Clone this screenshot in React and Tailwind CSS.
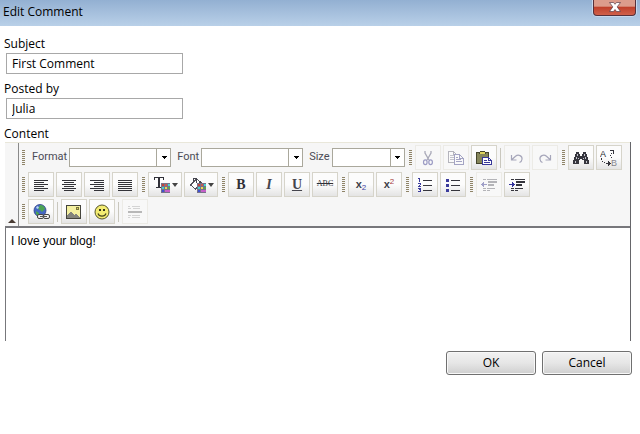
import React, { useState } from 'react';

const Icon = ({ children, w = 16, sharp = true }) => (
  <svg
    width={w}
    height="16"
    viewBox={`0 0 ${w} 16`}
    fill="none"
    shapeRendering={sharp ? 'crispEdges' : 'auto'}
    aria-hidden="true"
  >
    {children}
  </svg>
);

const Grip = () => (
  <svg width="4" height="15" viewBox="0 0 4 15" shapeRendering="crispEdges" aria-hidden="true">
    {[0, 2, 4, 6, 8, 10, 12, 14].map((y) => (
      <path key={y} d={`M0 ${y}h3v1h-3z`} fill="#8f8468" />
    ))}
  </svg>
);

const Separator = () => <div className="mx-px h-5 w-px bg-[#c9c7bd]" />;

const Group = ({ children }) => (
  <div className="flex items-center gap-0.5">
    <Grip />
    {children}
  </div>
);

const ToolButton = ({ label, disabled, menu, children }) => (
  <button
    type="button"
    title={label}
    aria-label={label}
    disabled={disabled}
    className={
      'flex h-[25px] shrink-0 items-center justify-center border ' +
      (menu ? 'w-[34px] gap-0.5 ' : 'w-[26px] ') +
      (disabled
        ? 'border-[#ecebe6] bg-[#f8f8f8]'
        : 'border-[#d6d4ca] bg-linear-to-b from-[#fcfcfc] from-50% to-[#e4e4e4]')
    }
  >
    {children}
    {menu && (
      <svg width="6" height="4" viewBox="0 0 6 4" aria-hidden="true">
        <path d="M0 0h6L3 4z" fill="#444" />
      </svg>
    )}
  </button>
);

const Combo = ({ id, label, wide }) => (
  <div className="flex items-center">
    <label htmlFor={id} className="pl-1 font-[Roboto,sans-serif] text-[11px] text-[#4a4a55]">
      {label}
    </label>
    <div className={'relative ml-0.5 ' + (wide ? 'w-[102px]' : 'w-[73px]')}>
      <select
        id={id}
        className="block h-[19px] w-full appearance-none border border-[#aaa89c] bg-white text-[11px]"
      />
      <span className="pointer-events-none absolute inset-y-0 right-0 flex w-[15px] items-center justify-center border-l border-[#aaa89c]">
        <svg width="5" height="3" viewBox="0 0 5 3" shapeRendering="crispEdges" aria-hidden="true">
          <path d="M0 0h5v1h-1v1h-1v1h-1v-1h-1v-1h-1z" fill="#000" />
        </svg>
      </span>
    </div>
  </div>
);

const AlignIcon = ({ d }) => (
  <Icon>
    <path d={d} stroke="#333338" />
  </Icon>
);

const Palette = () => (
  <>
    <path d="M8 6h9v10H8z" fill="#77738a" />
    <path d="M9 7h2v2H9z" fill="#c0463c" />
    <path d="M12 7h2v2h-2z" fill="#c85a50" />
    <path d="M15 7h2v2h-2z" fill="#48d6d6" />
    <path d="M9 10h2v2H9z" fill="#40d0d0" />
    <path d="M12 10h2v2h-2z" fill="#eeda50" />
    <path d="M15 10h2v2h-2z" fill="#58a850" />
    <path d="M9 13h2v2H9z" fill="#4050d0" />
    <path d="M12 13h5v2h-5z" fill="#c560c8" />
  </>
);

const CutIcon = () => (
  <Icon sharp={false}>
    <path d="M5 1v2l4 7M11 1v2L7 10" stroke="#a9a9b8" strokeWidth="1.3" />
    <ellipse cx="5.3" cy="12.3" rx="1.8" ry="2.4" stroke="#9c9cc4" strokeWidth="1.2" />
    <ellipse cx="10.6" cy="12.3" rx="1.8" ry="2.4" stroke="#9c9cc4" strokeWidth="1.2" />
  </Icon>
);

const CopyIcon = () => (
  <Icon>
    <path d="M.5 1.5h5l3 3v8h-8zM5.5 1.5v3h3" fill="#fafafa" stroke="#b4b4bc" />
    <path d="M2 5.5h4M2 7.5h4M2 9.5h4" stroke="#c4c4cc" />
    <path d="M6.5 4.5h5l4 4v6h-9zM11.5 4.5v4h4" fill="#fafafa" stroke="#a4a4c4" />
    <path d="M8 7.5h2M8 9.5h5M8 11.5h6" stroke="#a4a4c4" />
  </Icon>
);

const PasteIcon = () => (
  <Icon>
    <path d="M.5 2.5h12v11H.5z" fill="#86865a" stroke="#45452c" />
    <path d="M3 3.5h7M4 1.5h5" stroke="#45452c" />
    <path d="M4 2h5v2H4z" fill="#e0d45c" />
    <path d="M6.5 7.5h6l3 3v4h-9z" fill="#fff" stroke="#38389a" />
    <path d="M12.5 7.5v3h3M8 10.5h3M8 12.5h6" stroke="#38389a" />
  </Icon>
);

const UndoIcon = () => (
  <Icon sharp={false}>
    <path
      d="M2.5 5v5h5M3 9.5l3.5-3.3c3-2.4 7-.2 6.5 3-.2 1.8-1 2.8-2.5 3.3"
      stroke="#a6a6ba"
      strokeWidth="1.2"
    />
  </Icon>
);

const RedoIcon = () => (
  <Icon sharp={false}>
    <path
      d="M13.5 5v5h-5M13 9.5L9.5 6.2c-3-2.4-7-.2-6.5 3 .2 1.8 1 2.8 2.5 3.3"
      stroke="#a6a6ba"
      strokeWidth="1.2"
    />
  </Icon>
);

const FindIcon = () => (
  <Icon>
    <path
      d="M3 2h3v2h1v2h2V4h1V2h3v2h1v3h1v3h1v4h-5v-4H9V9H7v1H6v4H0v-4h1V7h1V4h1z"
      fill="#35353d"
    />
    <path
      d="M4 4h1v2H4zM11 4h1v2h-1zM3 7h1v2H3zM12 7h1v2h-1zM2 11h1v2H2zM13 11h1v2h-1zM5 8h1v1H5zM10 8h1v1h-1z"
      fill="#c4c4cc"
    />
  </Icon>
);

const ReplaceIcon = () => (
  <svg width="18" height="18" viewBox="0 0 18 18" fill="none" aria-hidden="true">
    <text x="0" y="8" fontSize="9" fontFamily="Liberation Sans, sans-serif" fill="#25252d">
      A
    </text>
    <text x="11" y="17" fontSize="9" fontFamily="Liberation Sans, sans-serif" fill="#85858d">
      B
    </text>
    <path
      d="M10 1h4v4h-1V2h-3zM11 4h1v1h-1zM10 6h1v1h-1zM11 8h1v1h-1zM1 9h1v2H1zM2 12h1v1H2zM4 13h1v1H4zM6 14h2v1H6zM8 12h1v1h1v1h1v1h-1v1H9v1H8z"
      fill="#35353d"
      shapeRendering="crispEdges"
    />
  </svg>
);

const FontColorIcon = () => (
  <Icon w={17}>
    <path d="M1 0h10v3h-1V1H7v9h2v1H3v-1h2V1H2v2H1z" fill="#303038" />
    <Palette />
  </Icon>
);

const FillIcon = () => (
  <Icon w={17}>
    <path d="M6 3.5L1.5 8l5 4 6-6-5-4z" fill="#fff" stroke="#55555d" />
    <path d="M4.5 5V1.5h3V6" stroke="#45454d" />
    <path d="M10 4h2v2h1v4h-2V7h-1z" fill="#45454d" />
    <Palette />
  </Icon>
);

const NumberedIcon = () => (
  <Icon>
    <path d="M6 3.5h9M6 8.5h9M6 13.5h9" stroke="#35353d" />
    <path
      d="M1 1h2v4H2V2H1zM1 6h3v2H3v1h1v1H1V9h1V8h1V7H1zM1 11h3v4H1v-1h2v-1H2v-1H1z"
      fill="#3c3c9c"
    />
  </Icon>
);

const BulletIcon = () => (
  <Icon>
    <path d="M6 3.5h9M6 8.5h9M6 13.5h9" stroke="#35353d" />
    <path d="M1 2h3v3H1zM1 7h3v3H1zM1 12h3v3H1z" fill="#3c3c9c" />
  </Icon>
);

const IndentIcon = ({ line, arrow, out }) => (
  <Icon>
    <path d="M2 2.5h3M6 2.5h10M2 11.5h3M6 11.5h8M2 13.5h3M6 13.5h3" stroke={line} />
    <path d="M7 4h9v2H7zM7 7h6v2H7z" fill={line} />
    <path
      d={
        out
          ? 'M0 7h1V6h1V5h1v2h3v1H3v2H2V9H1V8H0z'
          : 'M0 7h3V5h1v1h1v1h1v1H5v1H4v1H3V8H0z'
      }
      fill={arrow}
    />
  </Icon>
);

const LinkIcon = () => (
  <Icon w={17} sharp={false}>
    <circle cx="7" cy="6.5" r="6" fill="#4468c4" stroke="#2c3c84" strokeWidth=".8" />
    <path d="M7 1c3 0 5 2 5 4L9 8 7 6 5 5zM3 7l3 2v3L3 10z" fill="#4ca454" />
    <path d="M3 3l2-1 1 2-2 1z" fill="#b8d4f4" />
    <rect x="4.5" y="10.5" width="6" height="4" rx="1.5" fill="#eee" stroke="#444" />
    <rect x="10.5" y="10.5" width="6" height="4" rx="1.5" fill="#eee" stroke="#444" />
    <path d="M7 12.5h7" stroke="#555" />
  </Icon>
);

const ImageIcon = () => (
  <Icon>
    <path d="M.5 1.5h14v13H.5z" fill="#f4f0a0" stroke="#44443c" />
    <path d="M10.5 3.5h2v2h-2z" fill="#e4d058" stroke="#77753c" />
    <path d="M1 14v-3h1v-1h1V9h1V8h2v1h1v1h1v1h1v-1h2v1h1v1h1v1h1v1z" fill="#84847c" />
  </Icon>
);

const SmileIcon = () => (
  <Icon sharp={false}>
    <circle cx="8" cy="8" r="7" fill="#f3ec72" stroke="#55552c" />
    <path d="M5 5h2v2H5zM9 5h2v2H9z" fill="#33331c" />
    <path d="M4 9.5c1 3.5 7 3.5 8 0" stroke="#44441c" strokeWidth="1.2" />
  </Icon>
);

const RuleIcon = () => (
  <Icon>
    <path
      d="M1 2.5h2M5 2.5h8M1 4.5h3M6 4.5h7M1 11.5h3M5 11.5h8M1 13.5h2M5 13.5h8"
      stroke="#d4d4d4"
    />
    <path d="M1 7h14v2H1z" fill="#b8b8b8" />
  </Icon>
);

const TextField = ({ id, label, value, onChange }) => (
  <div className="mb-[3px]">
    <label htmlFor={id} className="block h-[18px] pl-1 leading-[18px]">
      {label}
    </label>
    <input
      id={id}
      type="text"
      value={value}
      onChange={(e) => onChange(e.target.value)}
      className="ml-1.5 block h-[21px] w-[177px] border border-[#a8a8a8] bg-white px-[5px] outline-none"
    />
  </div>
);

const DialogButton = ({ children }) => (
  <button
    type="button"
    className="h-6 w-[90px] rounded-[3px] border border-[#707070] bg-linear-to-b from-[#f2f2f2] via-[#e6e6e6] to-[#cfcfcf] shadow-[inset_0_0_0_1px_#f8f8f8]"
  >
    {children}
  </button>
);

const App = () => {
  const [subject, setSubject] = useState('First Comment');
  const [author, setAuthor] = useState('Julia');
  const [content, setContent] = useState('I love your blog!');

  return (
    <div className="min-h-screen bg-white font-['Open_Sans',sans-serif] text-xs text-black">
      <header className="flex h-[26px] items-start justify-between bg-linear-to-b from-[#93b0d2] to-[#b9d0e8] pr-1">
        <h1 className="pl-[3px] leading-6">Edit Comment</h1>
        <button
          type="button"
          aria-label="Close"
          className="flex h-4 w-[43px] items-center justify-center rounded-b-[4px] border border-t-0 border-[#57303a] bg-linear-to-b from-[#dc9c8c] from-40% via-[#c0412c] via-50% to-[#d0604a] pb-0.5 shadow-[0_0_0_1px_#c8d8ec]"
        >
          <svg width="12" height="10" viewBox="0 0 12 10" aria-hidden="true">
            <path
              d="M.5.5h4L6 2.3 7.5.5h4L8.2 4.900l3.300 4.600h-4L6 7.500 4.500 9.500h-4l3.300-4.600z"
              fill="#fff"
              stroke="#5a3c48"
              strokeWidth=".7"
            />
          </svg>
        </button>
      </header>

      <form className="pt-[9px]" onSubmit={(e) => e.preventDefault()}>
        <div className="flex flex-col gap-[3px]">
          <TextField id="subject" label="Subject" value={subject} onChange={setSubject} />
          <TextField id="author" label="Posted by" value={author} onChange={setAuthor} />
        </div>
        <label htmlFor="content" className="mt-[3px] block h-[17px] pl-1 leading-[18px]">
          Content
        </label>

        <div className="mr-[9px] ml-[5px] border-r border-[#66666a]">
          <div className="flex border-t border-t-[#e9e7da] bg-[#f6f6f6] font-['Liberation_Sans',sans-serif]">
            <button
              type="button"
              aria-label="Collapse toolbar"
              className="flex w-3.5 shrink-0 items-end justify-center border-r border-[#8a8a8a] pb-[3px]"
            >
              <svg width="8" height="4" viewBox="0 0 8 4" aria-hidden="true">
                <path d="M4 0l4 4H0z" fill="#4a3c34" />
              </svg>
            </button>
            <div className="flex flex-col gap-0.5 pt-0.5 pb-0.5 pl-[3px]">
              <div className="flex gap-1">
                <Group>
                  <Combo id="format" label="Format" wide />
                  <Combo id="font" label="Font" wide />
                  <Combo id="size" label="Size" />
                </Group>
                <Group>
                  <ToolButton label="Cut" disabled><CutIcon /></ToolButton>
                  <ToolButton label="Copy" disabled><CopyIcon /></ToolButton>
                  <ToolButton label="Paste"><PasteIcon /></ToolButton>
                  <Separator />
                  <ToolButton label="Undo" disabled><UndoIcon /></ToolButton>
                  <ToolButton label="Redo" disabled><RedoIcon /></ToolButton>
                </Group>
                <Group>
                  <ToolButton label="Find"><FindIcon /></ToolButton>
                  <ToolButton label="Replace"><ReplaceIcon /></ToolButton>
                </Group>
              </div>

              <div className="flex gap-1">
                <Group>
                  <ToolButton label="Align left">
                    <AlignIcon d="M1 3.5h14M1 5.5h10M1 7.5h14M1 9.5h10M1 11.5h14M1 13.5h10" />
                  </ToolButton>
                  <ToolButton label="Center">
                    <AlignIcon d="M1 3.5h14M3 5.5h10M1 7.5h14M3 9.5h10M1 11.5h14M3 13.5h10" />
                  </ToolButton>
                  <ToolButton label="Align right">
                    <AlignIcon d="M1 3.5h14M5 5.5h10M1 7.5h14M5 9.5h10M1 11.5h14M5 13.5h10" />
                  </ToolButton>
                  <ToolButton label="Justify">
                    <AlignIcon d="M1 3.5h14M1 5.5h14M1 7.5h14M1 9.5h14M1 11.5h14M1 13.5h14" />
                  </ToolButton>
                </Group>
                <Group>
                  <ToolButton label="Text color" menu><FontColorIcon /></ToolButton>
                  <ToolButton label="Background color" menu><FillIcon /></ToolButton>
                </Group>
                <Group>
                  <ToolButton label="Bold">
                    <span className="font-['Liberation_Serif',serif] text-sm font-bold text-[#303038]">B</span>
                  </ToolButton>
                  <ToolButton label="Italic">
                    <span className="font-['Liberation_Serif',serif] text-sm font-bold text-[#45454d] italic">I</span>
                  </ToolButton>
                  <ToolButton label="Underline">
                    <span className="font-['Liberation_Serif',serif] text-sm font-bold text-[#45454d] underline">U</span>
                  </ToolButton>
                  <ToolButton label="Strikethrough">
                    <span className="font-['Liberation_Serif',serif] text-[8px] text-[#303038] line-through">ABC</span>
                  </ToolButton>
                </Group>
                <Group>
                  <ToolButton label="Subscript">
                    <span className="text-[11px] font-bold text-[#404048]">
                      x<sub className="text-[8px] font-normal text-[#4444a4]">2</sub>
                    </span>
                  </ToolButton>
                  <ToolButton label="Superscript">
                    <span className="text-[11px] font-bold text-[#404048]">
                      x<sup className="text-[8px] font-normal text-[#a83c3c]">2</sup>
                    </span>
                  </ToolButton>
                </Group>
                <Group>
                  <ToolButton label="Numbered list"><NumberedIcon /></ToolButton>
                  <ToolButton label="Bulleted list"><BulletIcon /></ToolButton>
                </Group>
                <Group>
                  <ToolButton label="Decrease indent" disabled>
                    <IndentIcon line="#b4b4b8" arrow="#a0a0c8" out />
                  </ToolButton>
                  <ToolButton label="Increase indent">
                    <IndentIcon line="#35353d" arrow="#34349c" />
                  </ToolButton>
                </Group>
              </div>

              <Group>
                <ToolButton label="Insert link"><LinkIcon /></ToolButton>
                <Separator />
                <ToolButton label="Insert image"><ImageIcon /></ToolButton>
                <ToolButton label="Insert smiley"><SmileIcon /></ToolButton>
                <Separator />
                <ToolButton label="Horizontal line" disabled><RuleIcon /></ToolButton>
              </Group>
            </div>
          </div>
          <textarea
            id="content"
            value={content}
            onChange={(e) => setContent(e.target.value)}
            className="block h-[115px] w-full resize-none border-t-2 border-l border-[#77777b] px-[5px] py-[5px] font-['Liberation_Sans',sans-serif] outline-none"
          />
        </div>

        <div className="mt-2.5 mr-2 flex justify-end gap-1.5">
          <DialogButton>OK</DialogButton>
          <DialogButton>Cancel</DialogButton>
        </div>
      </form>
    </div>
  );
};

export default App;
